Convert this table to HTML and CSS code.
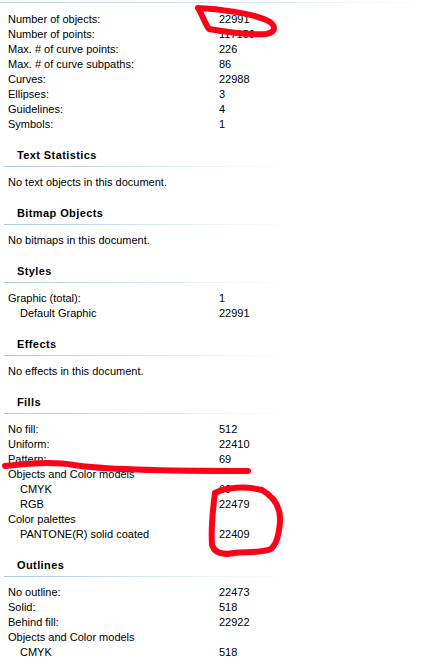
FILE: index.html
```html
<!DOCTYPE html>
<html>
<head>
<meta charset="utf-8">
<link rel="stylesheet" href="styles.css">
</head>
<body>
<div class="page">
  <div class="topline"></div>
  <div class="list first">
    <div class="row"><span class="label">Number of objects:</span><span class="value">22991</span></div>
    <div class="row"><span class="label">Number of points:</span><span class="value">117159</span></div>
    <div class="row"><span class="label">Max. # of curve points:</span><span class="value">226</span></div>
    <div class="row"><span class="label">Max. # of curve subpaths:</span><span class="value">86</span></div>
    <div class="row"><span class="label">Curves:</span><span class="value">22988</span></div>
    <div class="row"><span class="label">Ellipses:</span><span class="value">3</span></div>
    <div class="row"><span class="label">Guidelines:</span><span class="value">4</span></div>
    <div class="row"><span class="label">Symbols:</span><span class="value">1</span></div>
  </div>

  <div class="section">
    <div class="header">Text Statistics</div>
    <div class="rule"></div>
    <div class="list">
      <div class="row"><span class="label wide">No text objects in this document.</span></div>
    </div>
  </div>

  <div class="section">
    <div class="header">Bitmap Objects</div>
    <div class="rule"></div>
    <div class="list">
      <div class="row"><span class="label wide">No bitmaps in this document.</span></div>
    </div>
  </div>

  <div class="section">
    <div class="header">Styles</div>
    <div class="rule"></div>
    <div class="list">
      <div class="row"><span class="label">Graphic (total):</span><span class="value">1</span></div>
      <div class="row"><span class="label sub">Default Graphic</span><span class="value">22991</span></div>
    </div>
  </div>

  <div class="section">
    <div class="header">Effects</div>
    <div class="rule"></div>
    <div class="list">
      <div class="row"><span class="label wide">No effects in this document.</span></div>
    </div>
  </div>

  <div class="section">
    <div class="header">Fills</div>
    <div class="rule"></div>
    <div class="list">
      <div class="row"><span class="label">No fill:</span><span class="value">512</span></div>
      <div class="row"><span class="label">Uniform:</span><span class="value">22410</span></div>
      <div class="row"><span class="label">Pattern:</span><span class="value">69</span></div>
      <div class="row"><span class="label">Objects and Color models</span><span class="value"></span></div>
      <div class="row"><span class="label sub">CMYK</span><span class="value">69</span></div>
      <div class="row"><span class="label sub">RGB</span><span class="value">22479</span></div>
      <div class="row"><span class="label">Color palettes</span><span class="value"></span></div>
      <div class="row"><span class="label sub">PANTONE(R) solid coated</span><span class="value">22409</span></div>
    </div>
  </div>

  <div class="section">
    <div class="header">Outlines</div>
    <div class="rule"></div>
    <div class="list">
      <div class="row"><span class="label">No outline:</span><span class="value">22473</span></div>
      <div class="row"><span class="label">Solid:</span><span class="value">518</span></div>
      <div class="row"><span class="label">Behind fill:</span><span class="value">22922</span></div>
      <div class="row"><span class="label">Objects and Color models</span><span class="value"></span></div>
      <div class="row"><span class="label sub">CMYK</span><span class="value">518</span></div>
    </div>
  </div>

  <svg class="marks" width="429" height="671" viewBox="0 0 429 671" xmlns="http://www.w3.org/2000/svg">
    <g fill="none" stroke="#ff0018" stroke-width="6" stroke-linecap="round" stroke-linejoin="round">
      <path d="M198,8 C220,9 248,13 264,19 C277,24 277,32 266,34 C248,35 226,32 209,29 C205,24 203,16 198,8"/>
      <path d="M5,466 C30,463 58,462 74,465 C105,470 190,471 248,471"/>
      <path d="M215,493 C226,487 246,486 262,490 C274,497 281,508 280,522 C279,534 277,544 271,549 C258,554 244,551 234,553 C224,555 215,554 212,545 C211,530 213,508 215,493"/>
    </g>
  </svg>
</div>
</body>
</html>
```

FILE: styles.css
```css
html, body {
  margin: 0;
  padding: 0;
  background: #ffffff;
}

.page {
  position: relative;
  width: 429px;
  height: 671px;
  overflow: hidden;
  font-family: "Liberation Sans", Arial, sans-serif;
  font-size: 11px;
  color: #000000;
  padding-top: 2px;
  box-sizing: border-box;
}

.topline {
  height: 1px;
  background: linear-gradient(to right, #b9d3f1, #dce9f9 60%, #ffffff);
}

.list {
  display: flex;
  flex-direction: column;
  padding-top: 8px;
}

.list.first {
  padding-top: 9px;
}

.row {
  display: flex;
  height: 15px;
  line-height: 15px;
  padding-left: 8px;
}

.label {
  width: 211px;
  flex: none;
  white-space: nowrap;
}

.label.wide {
  width: auto;
}

.label.sub {
  padding-left: 12px;
  box-sizing: border-box;
}

.value {
  white-space: nowrap;
}

.section {
  display: flex;
  flex-direction: column;
}

.header {
  margin-top: 16px;
  padding-left: 17px;
  height: 15px;
  line-height: 15px;
  font-weight: bold;
  letter-spacing: 0.4px;
}

.rule {
  margin-top: 3px;
  margin-left: 4px;
  width: 292px;
  height: 1px;
  background: linear-gradient(to right, #a9c8ee, #d2e3f8 45%, #f3f7fd 80%, #ffffff);
}

.marks {
  position: absolute;
  left: 0;
  top: 0;
  pointer-events: none;
}
```
